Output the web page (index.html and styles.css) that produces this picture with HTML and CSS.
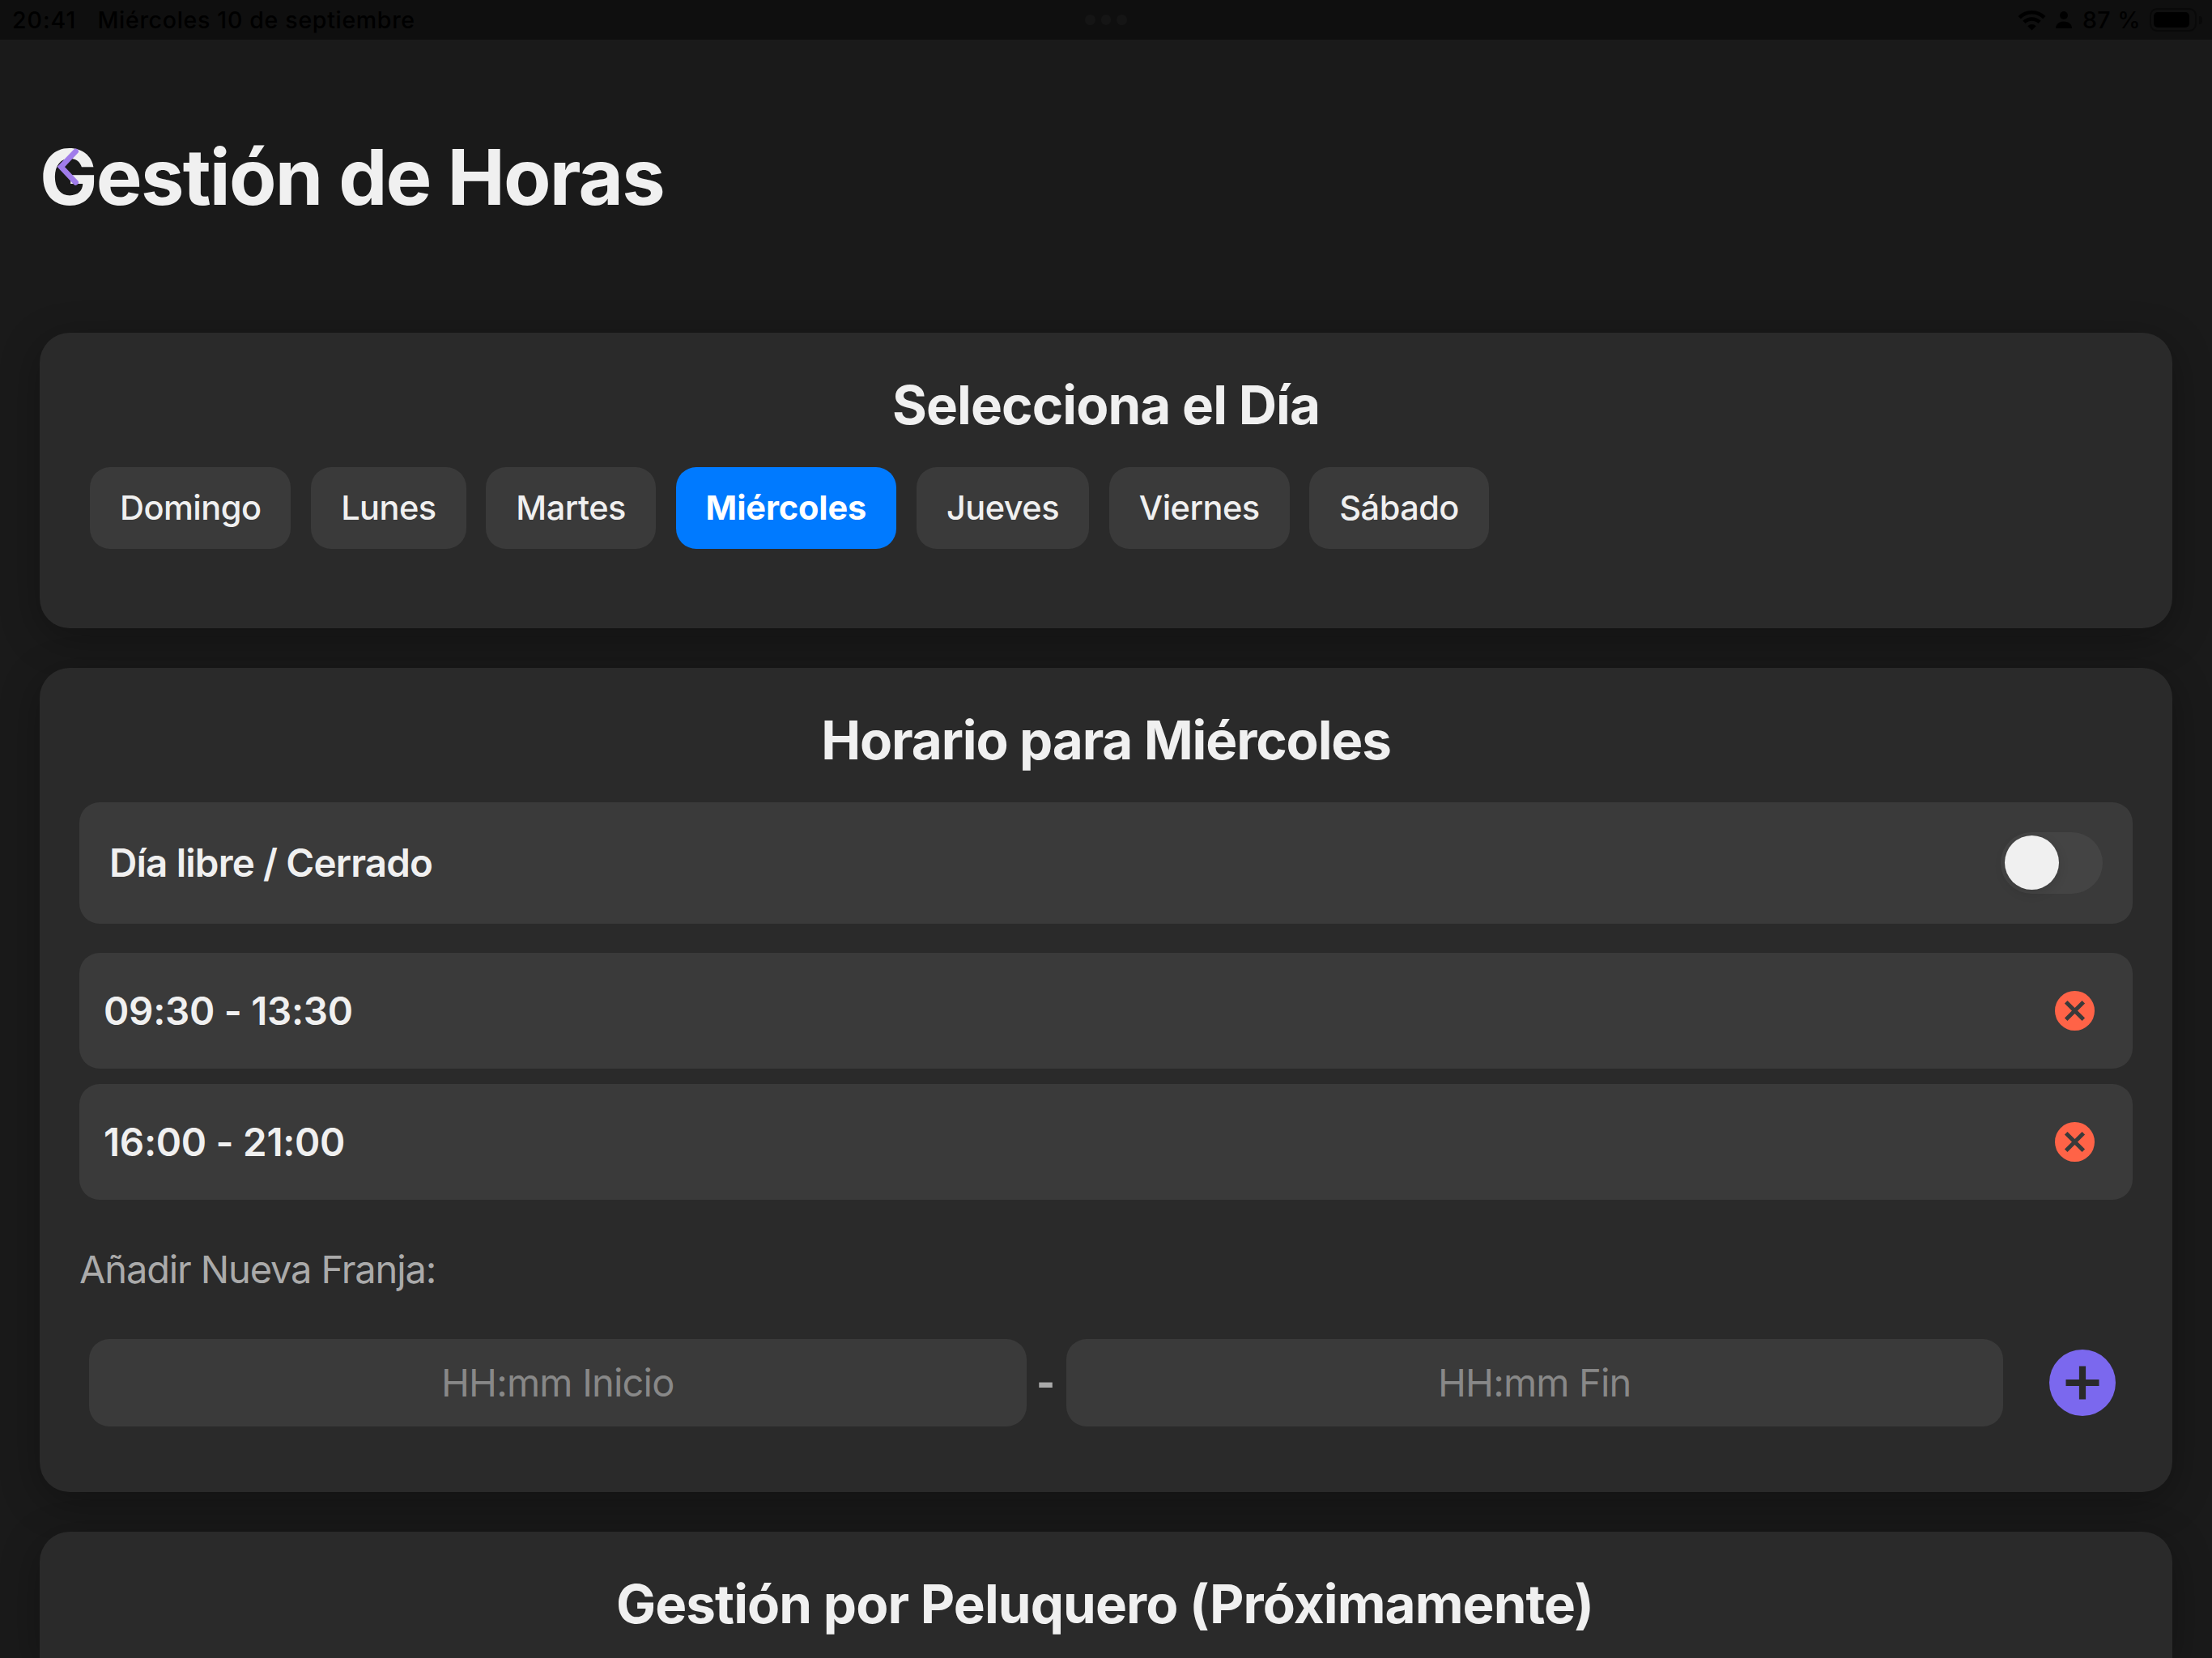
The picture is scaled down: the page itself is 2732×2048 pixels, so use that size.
FILE: index.html
```html
<!DOCTYPE html>
<html lang="es">
<head>
  <meta charset="UTF-8" />
  <meta name="viewport" content="width=device-width, initial-scale=1.0"/>
  <title>Gestión de Horas</title>
  <link rel="stylesheet" href="styles.css">
</head>
<body>

  <!-- Barra de estado -->
  <div class="status-bar">
    <div class="status-left">
      <span class="clock">20:41</span>
      <span class="date">Miércoles 10 de septiembre</span>
    </div>
    <div class="dots"><i></i><i></i><i></i></div>
    <div class="status-right">
      <svg class="wifi" viewBox="0 0 35 26">
        <path d="M2.2 9.6a21.6 21.6 0 0 1 30.6 0M8 15.4a13.4 13.4 0 0 1 19 0" fill="none" stroke="#000" stroke-width="4.6"/>
        <path d="M17.5 25.5l-5.2-5.3a7.4 7.4 0 0 1 10.4 0z"/>
      </svg>
      <svg class="person" viewBox="0 0 20 21">
        <circle cx="10" cy="5" r="4.9"/>
        <path d="M0 21c0-5 4-8.500 10-8.500s10 3.500 10 8.500z"/>
      </svg>
      <span class="percent">87 %</span>
      <span class="battery"><span class="level"></span></span>
      <span class="nub"></span>
    </div>
  </div>

  <main>
    <header class="page-header">
      <h1>Gestión de Horas</h1>
      <svg class="back" viewBox="0 0 28 48">
        <path d="M24.500 5L6.300 24.100l18.200 19.200"/>
      </svg>
    </header>

    <!-- Días -->
    <section class="card card-days">
      <h2>Selecciona el Día</h2>
      <div class="days">
        <button class="day">Domingo</button>
        <button class="day">Lunes</button>
        <button class="day">Martes</button>
        <button class="day active">Miércoles</button>
        <button class="day">Jueves</button>
        <button class="day">Viernes</button>
        <button class="day">Sábado</button>
      </div>
    </section>

    <!-- Horario -->
    <section class="card card-schedule">
      <h2>Horario para Miércoles</h2>
      <div class="row row-closed">
        <span class="closed-label">Día libre / Cerrado</span>
        <span class="switch"><span class="knob"></span></span>
      </div>
      <div class="row slot">
        <span>09:30 - 13:30</span>
        <svg class="remove" viewBox="0 0 49 49">
          <circle cx="24.500" cy="24.500" r="24.500"/>
          <path d="M13.700 13.700l21.600 21.600M35.300 13.700l-21.600 21.600"/>
        </svg>
      </div>
      <div class="row slot">
        <span>16:00 - 21:00</span>
        <svg class="remove" viewBox="0 0 49 49">
          <circle cx="24.500" cy="24.500" r="24.500"/>
          <path d="M13.700 13.700l21.600 21.600M35.300 13.700l-21.600 21.600"/>
        </svg>
      </div>
      <p class="add-label">Añadir Nueva Franja:</p>
      <div class="add-row">
        <input type="text" placeholder="HH:mm Inicio">
        <span class="dash">-</span>
        <input type="text" placeholder="HH:mm Fin">
        <svg class="add" viewBox="0 0 82 82">
          <circle cx="41" cy="41" r="41"/>
          <path d="M20.500 41h41M41 20.500v41"/>
        </svg>
      </div>
    </section>

    <section class="card card-stylist">
      <h2>Gestión por Peluquero (Próximamente)</h2>
    </section>
  </main>

</body>
</html>
```
FILE: styles.css
```css
* {
  box-sizing: border-box;
}

body {
  margin: 0;
  height: 2048px;
  overflow: hidden;
  background: #1a1a1a;
  font-family: Inter, "Liberation Sans", sans-serif;
  color: #f0f0f0;
  white-space: nowrap;
}

h1, h2, p {
  margin: 0;
}

/* Barra de estado */
.status-bar {
  display: grid;
  grid-template-columns: 1fr auto 1fr;
  align-items: center;
  height: 49px;
  padding: 0 12px;
  background: #0f0f0f;
  color: #000;
  font-size: 28.5px;
  line-height: 47px;
  font-weight: 500;
}

.status-left {
  display: flex;
  gap: 26px;
  padding-left: 3px;
  letter-spacing: 0.7px;
}

.clock {
  letter-spacing: 1px;
}

.dots {
  display: flex;
  gap: 7px;
}

.dots i {
  width: 12.7px;
  height: 12.7px;
  border-radius: 50%;
  background: #151515;
}

.status-right {
  display: flex;
  justify-content: flex-end;
  align-items: center;
}

.wifi {
  width: 35px;
  height: 26px;
  margin-right: 12px;
}

.person {
  width: 20px;
  height: 21px;
  margin-right: 13px;
}

.percent {
  margin-right: 11px;
  letter-spacing: 0.5px;
}

.battery {
  width: 58px;
  height: 29px;
  padding: 3px;
  border: 2px solid #090909;
  border-radius: 9px;
}

.level {
  display: block;
  width: 44px;
  height: 19px;
  border-radius: 5px;
  background: #000;
}

.nub {
  width: 4px;
  height: 10px;
  margin-left: 3px;
  border-radius: 0 4px 4px 0;
  background: #090909;
}

main {
  padding: 109px 49px 0;
}

.page-header {
  position: relative;
  height: 253px;
}

h1 {
  font-size: 95.5px;
  line-height: 120px;
  font-weight: 700;
  letter-spacing: -1.8px;
}

/* la flecha queda encima del título */
.back {
  position: absolute;
  left: 20px;
  top: 24px;
  width: 28px;
  height: 48px;
  fill: none;
  stroke: #a07cea;
  stroke-width: 6.800;
  stroke-linecap: round;
}

.card {
  padding: 50px 49px 0;
  margin-bottom: 49px;
  border-radius: 37px;
  background: #2a2a2a;
  box-shadow: 0 12px 50px rgba(0,0,0,0.3);
}

.card-days { height: 365px; }
.card-schedule { height: 1018px; }

.card-stylist {
  height: 156px;
  margin-bottom: 0;
  border-radius: 37px 37px 0 0;
}

h2 {
  margin-bottom: 36px;
  font-size: 65.5px;
  line-height: 80px;
  font-weight: 700;
  letter-spacing: -0.9px;
  text-align: center;
}

.card-schedule h2 {
  letter-spacing: -1.1px;
}

.card-stylist h2 {
  margin-bottom: 0;
  padding-right: 3px;
}

.days {
  display: flex;
  gap: 24.7px;
  padding-left: 13px;
}

.day {
  height: 101px;
  padding: 0 37px 1px;
  border: none;
  border-radius: 25px;
  background: #3a3a3a;
  color: #f0f0f0;
  font-family: inherit;
  font-size: 41.5px;
  font-weight: 500;
  letter-spacing: -0.52px;
}

.day.active {
  background: #007aff;
  color: white;
  font-weight: 700;
  letter-spacing: -0.1px;
}

.row {
  display: flex;
  justify-content: space-between;
  align-items: center;
  border-radius: 25px;
  background: #3a3a3a;
  font-size: 47.5px;
  font-weight: 600;
}

.row-closed {
  height: 149.5px;
  margin-bottom: 36.5px;
  padding: 0 37px;
}

.closed-label {
  letter-spacing: -0.83px;
}

.switch {
  width: 126px;
  height: 76px;
  padding: 4.500px 5px;
  border-radius: 38px;
  background: #444;
}

.knob {
  display: block;
  width: 67px;
  height: 67px;
  border-radius: 50%;
  background: #f0f0f0;
  box-shadow: 0 4px 14px rgba(0,0,0,0.12);
}

.slot {
  height: 142.5px;
  margin-bottom: 19.500px;
  padding: 0 47px 0 30px;
  letter-spacing: -0.28px;
}

.remove {
  width: 49px;
  height: 49px;
  fill: #ff6347;
  stroke: none;
}

.remove path {
  stroke: #3a3a3a;
  stroke-width: 5;
}

.add-label {
  margin: 56px 0;
  font-size: 47px;
  line-height: 60px;
  letter-spacing: -1.13px;
  color: #aaa;
}

.add-row {
  display: flex;
  align-items: center;
  padding: 0 21px 0 12px;
}

.add-row input {
  flex: 1;
  min-width: 0;
  height: 108px;
  padding: 0 0 1px;
  border: none;
  border-radius: 25px;
  background: #3a3a3a;
  font-family: inherit;
  font-size: 47px;
  letter-spacing: -0.8px;
  text-align: center;
}

.add-row input::placeholder {
  color: #888;
}

.dash {
  width: 49px;
  padding-right: 1px;
  text-align: center;
  font-size: 49px;
  font-weight: 800;
  color: #aaa;
}

.add {
  width: 82px;
  height: 82px;
  margin-left: 57px;
  fill: #7b68ee;
}

.add path {
  stroke: #2a2a2a;
  stroke-width: 8.200;
}
```
